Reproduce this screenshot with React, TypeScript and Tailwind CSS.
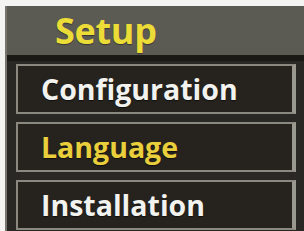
export default function App() {
  const items = [
    { label: "Configuration", active: false },
    { label: "Language", active: true },
    { label: "Installation", active: false },
  ];

  return (
    <div className="w-[304px] h-[231px] bg-[#f4f4f2] pt-[6px] pl-[5px] overflow-hidden">
      <div
        className="h-full flex flex-col border-l-2 border-[#77766e]"
        style={{ fontFamily: '"Open Sans", "DejaVu Sans", sans-serif' }}
      >
        <div className="h-[49px] shrink-0 bg-[#5c5b53] pl-[48px] flex items-center">
          <span className="text-[36px] font-bold leading-none text-[#ecdc38] tracking-[-0.3px] [text-shadow:0_1px_1px_rgba(0,0,0,0.4)]">
            Setup
          </span>
        </div>
        <div className="flex-1 bg-[#2a2824] border-t-[6px] border-[#1c1a17] pt-[3px] pl-[9px] pr-[8px] flex flex-col gap-[8px]">
          {items.map((it) => (
            <div
              key={it.label}
              className="h-[50px] shrink-0 bg-[#26231f] border-2 border-r-[4px] border-[#8a897f] border-r-[#9a998f] flex items-center pl-[23px]"
            >
              <span
                className={
                  "text-[28.5px] font-bold leading-none [text-shadow:0_1px_1px_rgba(0,0,0,0.6)] " +
                  (it.active ? "text-[#e9cf3c]" : "text-[#f2f2ee]")
                }
              >
                {it.label}
              </span>
            </div>
          ))}
        </div>
      </div>
    </div>
  );
}
